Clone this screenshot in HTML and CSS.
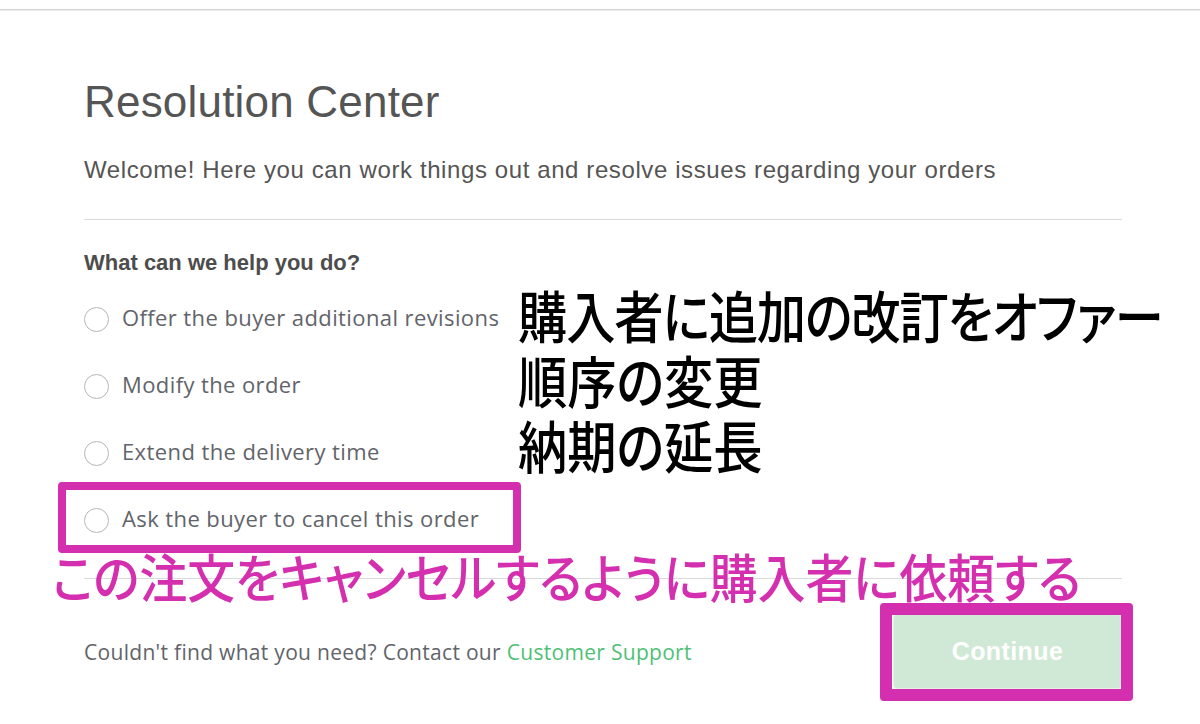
FILE: index.html
```html
<!DOCTYPE html>
<html lang="en">
<head>
<meta charset="utf-8">
<title>Resolution Center</title>
<link rel="stylesheet" href="styles.css">
</head>
<body>
<div class="page">
  <div class="topbar"></div>
  <main class="panel">
    <h1 class="title">Resolution Center</h1>
    <p class="subtitle">Welcome! Here you can work things out and resolve issues regarding your orders</p>
    <hr class="divider">
    <h2 class="question">What can we help you do?</h2>
    <ul class="options">
      <li class="option"><span class="radio"></span><span class="option-label">Offer the buyer additional revisions</span></li>
      <li class="option"><span class="radio"></span><span class="option-label">Modify the order</span></li>
      <li class="option"><span class="radio"></span><span class="option-label">Extend the delivery time</span></li>
      <li class="option"><span class="radio"></span><span class="option-label">Ask the buyer to cancel this order</span></li>
    </ul>
    <hr class="divider divider-bottom">
    <div class="footer">
      <p class="help">Couldn't find what you need? Contact our <a class="support" href="#">Customer Support</a></p>
      <button class="continue" type="button">Continue</button>
    </div>
  </main>

  <div class="note-black">
    <div class="note-line note-line-long">購入者に追加の改訂をオファー</div>
    <div class="note-line">順序の変更</div>
    <div class="note-line">納期の延長</div>
  </div>
  <div class="note-pink">この注文をキャンセルするように購入者に依頼する</div>
  <div class="mark mark-option"></div>
  <div class="mark mark-button"></div>
</div>
</body>
</html>
```

FILE: styles.css
```css
* { box-sizing: border-box; }

html, body {
  margin: 0;
  padding: 0;
  background: #ffffff;
}

body {
  font-family: "Liberation Sans", Arial, sans-serif;
  color: #555555;
}

.page {
  position: relative;
  width: 1200px;
  height: 724px;
  overflow: hidden;
}

.topbar {
  height: 10px;
  border-bottom: 1px solid #d4d4d4;
  box-shadow: 0 1px 0 #ececec;
}

.panel {
  padding: 0 78px 0 84px;
}

.title {
  margin: 67px 0 0;
  font-size: 44px;
  line-height: 50px;
  font-weight: 400;
  letter-spacing: 0.2px;
  color: #555555;
}

.subtitle {
  margin: 29px 0 0;
  font-size: 24px;
  line-height: 28px;
  letter-spacing: 0.6px;
  color: #555555;
}

.divider {
  margin: 35px 0 0;
  border: 0;
  height: 1px;
  background: #dadbdd;
}

.question {
  margin: 30px 0 0;
  font-size: 22px;
  line-height: 26px;
  font-weight: 700;
  color: #4d4d4d;
}

.options {
  list-style: none;
  margin: 10px 0 0;
  padding: 0;
}

.option {
  display: flex;
  align-items: center;
  height: 67px;
  gap: 13px;
}

.radio {
  flex: none;
  width: 25px;
  height: 25px;
  border: 1.5px solid #b5b6ba;
  border-radius: 50%;
  background: #fff;
}

.option-label {
  padding-bottom: 6px;
  font-family: "Open Sans", sans-serif;
  font-size: 22px;
  letter-spacing: 0.4px;
  color: #62646a;
}

.divider-bottom {
  margin-top: 24px;
}

.footer {
  display: flex;
  align-items: center;
  justify-content: space-between;
  margin-top: 35px;
}

.help {
  margin: 0;
  font-family: "Open Sans", sans-serif;
  font-size: 21px;
  letter-spacing: 0.3px;
  color: #62646a;
}

.support {
  color: #4fbf76;
  text-decoration: none;
}

.continue {
  width: 229px;
  height: 75px;
  border: 1px solid #e2f2e7;
  border-radius: 4px;
  background: #cfe9d6;
  color: #ffffff;
  font-family: "Liberation Sans", Arial, sans-serif;
  font-weight: 700;
  font-size: 25px;
  letter-spacing: 0.4px;
}

/* annotations */
.note-black {
  position: absolute;
  left: 518px;
  top: 281px;
  font-family: "Noto Sans CJK JP", sans-serif;
  font-size: 56px;
  font-weight: 500;
  line-height: 65px;
  color: #000;
  font-feature-settings: "palt";
  white-space: nowrap;
  transform: scaleX(0.88);
  transform-origin: left top;
}

.note-line-long {
  letter-spacing: -1.3px;
}

.note-pink {
  position: absolute;
  left: 52px;
  top: 546px;
  font-family: "Noto Sans CJK JP", sans-serif;
  font-size: 52px;
  font-weight: 500;
  line-height: 60px;
  color: #d42fae;
  font-feature-settings: "palt";
  white-space: nowrap;
  transform: scaleX(0.92);
  transform-origin: left top;
}

.mark {
  position: absolute;
  border-style: solid;
  border-color: #d42fae;
  border-radius: 4px;
}

.mark-option {
  left: 58px;
  top: 482px;
  width: 463px;
  height: 71px;
  border-width: 8px;
}

.mark-button {
  left: 880px;
  top: 603px;
  width: 253px;
  height: 98px;
  border-width: 12px;
}
```
